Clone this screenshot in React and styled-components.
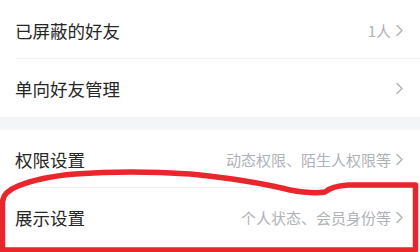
import React from 'react';
import styled, { createGlobalStyle } from 'styled-components';

const GlobalStyle = createGlobalStyle`
  html, body {
    margin: 0;
    padding: 0;
    background: #ffffff;
  }
  body {
    font-family: "Noto Sans CJK SC", "Noto Sans", sans-serif;
  }
`;

const Page = styled.div`
  position: relative;
  width: 420px;
  height: 252px;
  overflow: hidden;
  background: #ffffff;
`;

const Group = styled.div`
  background: #ffffff;
  padding-top: ${(props) => props.$top || 0}px;
`;

const Gap = styled.div`
  height: 13px;
  background: #f4f5f7;
`;

const Row = styled.div`
  display: flex;
  align-items: center;
  justify-content: space-between;
  height: 58px;
  padding: 0 16px 0 15px;
  position: relative;

  &::after {
    content: '';
    display: ${(props) => (props.$divider ? 'block' : 'none')};
    position: absolute;
    left: 16px;
    right: 0;
    bottom: 0;
    height: 1px;
    background: #f0f1f3;
  }
`;

const Label = styled.span`
  font-size: 17.5px;
  color: #262626;
`;

const Right = styled.div`
  display: flex;
  align-items: center;
  gap: 4px;
`;

const Value = styled.span`
  font-size: 15px;
  color: #afb2b7;
`;

const Outline = styled.svg`
  position: absolute;
  left: 0;
  top: 0;
  pointer-events: none;
`;

const Chevron = () => (
  <svg width="9" height="13" viewBox="0 0 9 13">
    <path d="M2 1.5 L7 6.5 L2 11.5" fill="none" stroke="#b4b7bc" strokeWidth="1.6" strokeLinecap="round" strokeLinejoin="round" />
  </svg>
);

const rows = [
  [
    { label: '已屏蔽的好友', value: '1人', divider: true },
    { label: '单向好友管理', value: '' },
  ],
  [
    { label: '权限设置', value: '动态权限、陌生人权限等', divider: true },
    { label: '展示设置', value: '个人状态、会员身份等' },
  ],
];

export default function App() {
  return (
    <Page>
      <GlobalStyle />
      {rows.map((group, gi) => (
        <React.Fragment key={gi}>
          {gi > 0 && <Gap />}
          <Group $top={gi === 0 ? 1 : 0}>
            {group.map((r) => (
              <Row key={r.label} $divider={r.divider}>
                <Label>{r.label}</Label>
                <Right>
                  {r.value && <Value>{r.value}</Value>}
                  <Chevron />
                </Right>
              </Row>
            ))}
          </Group>
        </React.Fragment>
      ))}
      <Outline width="420" height="252" viewBox="0 0 420 252">
        <path
          d="M2.5 252 L2.5 202 Q3 192 18 186 Q40 177 75 174 Q130 170 190 174 Q250 180 290 190 Q312 194 325 192 Q332 186 348 185 L415.5 185 L415.5 250 L0 250"
          fill="none"
          stroke="#e8262b"
          strokeWidth="5.5"
          strokeLinejoin="round"
          strokeLinecap="round"
        />
      </Outline>
    </Page>
  );
}
